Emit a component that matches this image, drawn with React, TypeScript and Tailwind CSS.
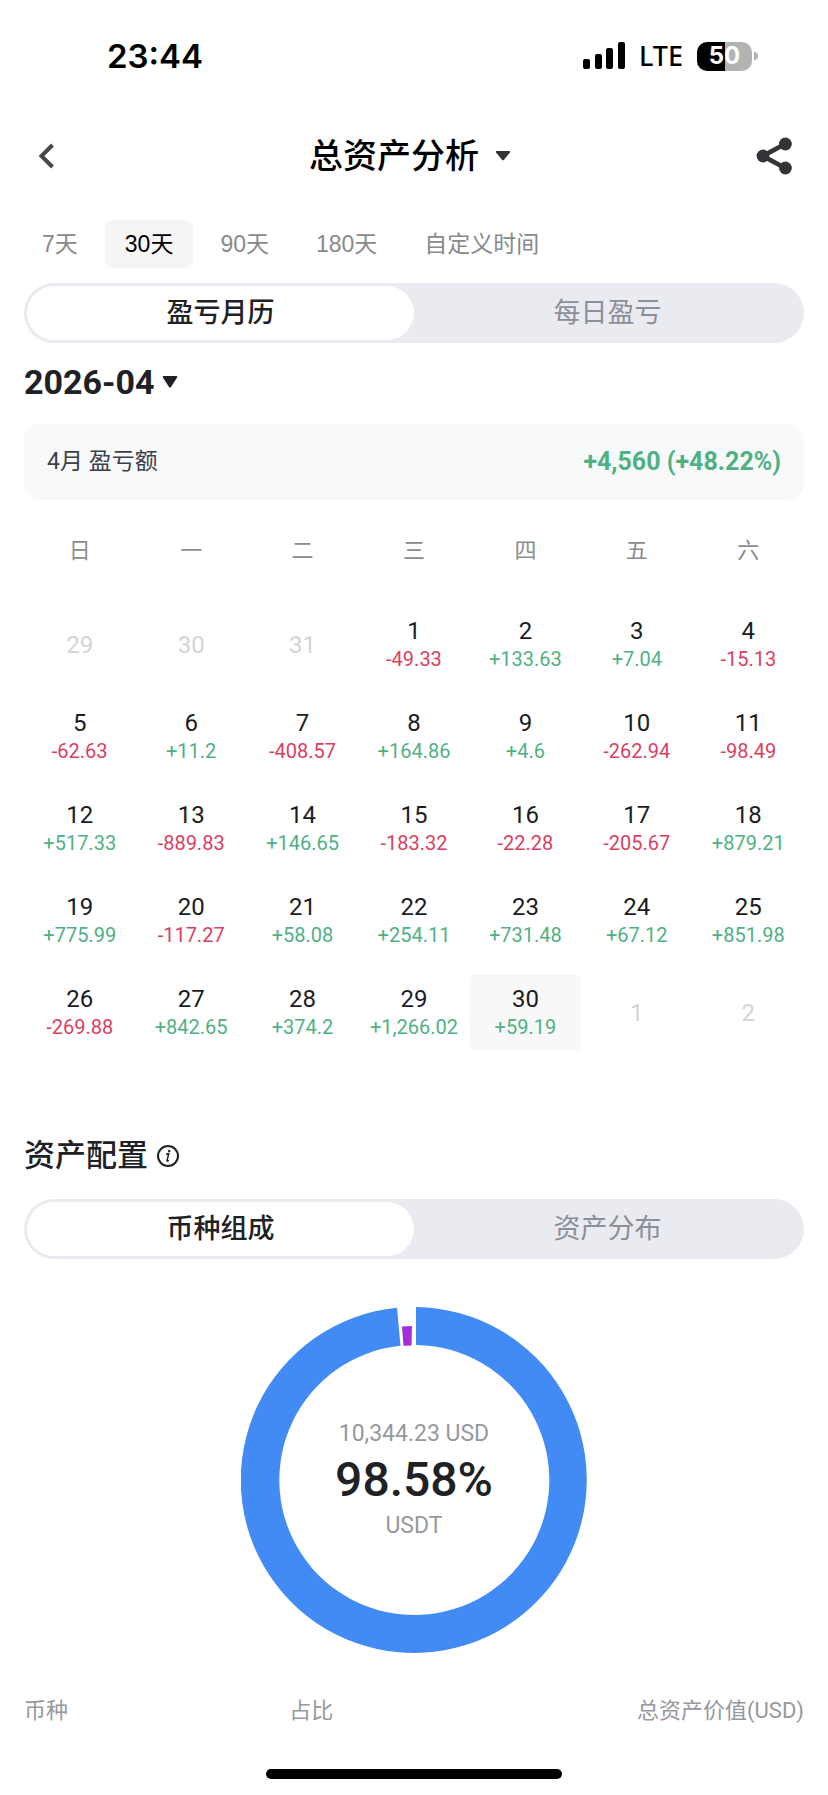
import { useState } from 'react';

type Day = { day: number; value?: string; muted?: boolean };

const ranges = ['7天', '30天', '90天', '180天', '自定义时间'];
const weekdays = ['日', '一', '二', '三', '四', '五', '六'];

const weeks: Day[][] = [
	[
		{ day: 29, muted: true },
		{ day: 30, muted: true },
		{ day: 31, muted: true },
		{ day: 1, value: '-49.33' },
		{ day: 2, value: '+133.63' },
		{ day: 3, value: '+7.04' },
		{ day: 4, value: '-15.13' },
	],
	[
		{ day: 5, value: '-62.63' },
		{ day: 6, value: '+11.2' },
		{ day: 7, value: '-408.57' },
		{ day: 8, value: '+164.86' },
		{ day: 9, value: '+4.6' },
		{ day: 10, value: '-262.94' },
		{ day: 11, value: '-98.49' },
	],
	[
		{ day: 12, value: '+517.33' },
		{ day: 13, value: '-889.83' },
		{ day: 14, value: '+146.65' },
		{ day: 15, value: '-183.32' },
		{ day: 16, value: '-22.28' },
		{ day: 17, value: '-205.67' },
		{ day: 18, value: '+879.21' },
	],
	[
		{ day: 19, value: '+775.99' },
		{ day: 20, value: '-117.27' },
		{ day: 21, value: '+58.08' },
		{ day: 22, value: '+254.11' },
		{ day: 23, value: '+731.48' },
		{ day: 24, value: '+67.12' },
		{ day: 25, value: '+851.98' },
	],
	[
		{ day: 26, value: '-269.88' },
		{ day: 27, value: '+842.65' },
		{ day: 28, value: '+374.2' },
		{ day: 29, value: '+1,266.02' },
		{ day: 30, value: '+59.19' },
		{ day: 1, muted: true },
		{ day: 2, muted: true },
	],
];

const StatusBar = () => (
	<div className="flex h-10 items-center justify-between pl-[83px] pr-[46px] text-black">
		<span className="font-['Inter',sans-serif] text-[33px] leading-10 font-semibold">23:44</span>
		<div className="flex items-center">
			<svg width="42" height="28" viewBox="0 0 42 28" aria-hidden="true">
				<rect x="0" y="17" width="7" height="10" rx="2" />
				<rect x="12" y="12" width="7" height="15" rx="2" />
				<rect x="23" y="6" width="7" height="21" rx="2" />
				<rect x="35" y="0" width="7" height="27" rx="2" />
			</svg>
			<span className="ml-3.5 font-['Noto_Sans',sans-serif] text-[27px] leading-8 font-medium">LTE</span>
			<div className="ml-3.5 flex items-center">
				<div className="flex h-[29px] w-[55px] items-center justify-center rounded-[10px] bg-linear-to-r from-black from-50% to-[#b3b3b3] to-50% font-['Inter',sans-serif] text-2xl font-bold text-white">
					50
				</div>
				<svg className="ml-0.5" width="4" height="10" viewBox="0 0 4 10" aria-hidden="true">
					<path d="M0 0.5C2.6 1.4 4 3 4 5S2.6 8.6 0 9.5Z" fill="#b3b3b3" />
				</svg>
			</div>
		</div>
	</div>
);

const NavBar = () => (
	<header className="mt-14 flex h-12 items-center justify-between px-3">
		<button type="button" aria-label="返回" className="flex w-8 items-center">
			<svg width="20" height="28" viewBox="0 0 20 28" fill="none" aria-hidden="true">
				<path d="M16.5 3 5.5 14 16.5 25" stroke="#47484b" strokeWidth="4" />
			</svg>
		</button>
		<button type="button" aria-haspopup="menu" className="flex items-center gap-4 text-black">
			<h1 className="text-[34px] leading-[48px] font-medium">总资产分析</h1>
			<svg width="16" height="12" viewBox="0 0 16 12" aria-hidden="true">
				<path d="M1.6 1H14.4C15.2 1 15.5 1.9 15 2.5L9 9.7C8.4 10.4 7.6 10.4 7 9.7L1 2.5C.5 1.9.8 1 1.6 1Z" fill="#333437" />
			</svg>
		</button>
		<button type="button" aria-label="分享" className="flex w-10 justify-end">
			<svg width="36" height="38" viewBox="0 0 36 38" aria-hidden="true">
				<path d="M29 7 7 19 29 31" stroke="#333437" strokeWidth="4.8" fill="none" />
				<circle cx="7" cy="19" r="6.4" fill="#333437" />
				<circle cx="29.4" cy="7" r="6.4" fill="#333437" />
				<circle cx="29.4" cy="31" r="6.4" fill="#333437" />
			</svg>
		</button>
	</header>
);

const Segmented = ({ options }: { options: string[] }) => {
	const [active, setActive] = useState(options[0]);
	return (
		<div className="flex h-[60px] rounded-full bg-[#eaebf1] p-[3px]">
			{options.map((option) => (
				<button
					key={option}
					type="button"
					aria-pressed={option === active}
					onClick={() => setActive(option)}
					className={`flex-1 rounded-full text-[27px] leading-10 ${
						option === active ? 'bg-white font-medium text-[#202124]' : 'text-[#8c8f98]'
					}`}>
					{option}
				</button>
			))}
		</div>
	);
};

const Calendar = () => {
	const [selected, setSelected] = useState(30);
	return (
		<table className="mt-[21px] w-full table-fixed border-separate border-spacing-x-0 border-spacing-y-4">
			<thead>
				<tr>
					{weekdays.map((name) => (
						<th key={name} className="h-[54px] p-0 align-top text-[22px] leading-7 font-normal text-[#8a8c8f]">
							{name}
						</th>
					))}
				</tr>
			</thead>
			<tbody>
				{weeks.map((week, i) => (
					<tr key={i}>
						{week.map(({ day, value, muted }) => (
							<td key={day} className="p-0">
								<button
									type="button"
									disabled={muted}
									onClick={() => setSelected(day)}
									className={`flex h-[76px] w-full flex-col items-center justify-center rounded-sm ${
										!muted && day === selected ? 'bg-[#f8f8f8]' : ''
									}`}>
									<span className={`text-2xl leading-7 ${muted ? 'text-[#d3d4d8]' : 'text-[#1b1c1f]'}`}>{day}</span>
									{value && (
										<span
											className={`text-xl leading-7 ${value.startsWith('+') ? 'text-[#4fb183]' : 'text-[#da3f62]'}`}>
											{value}
										</span>
									)}
								</button>
							</td>
						))}
					</tr>
				))}
			</tbody>
		</table>
	);
};

const Donut = () => (
	<div className="mt-12 grid place-items-center">
		<svg className="col-start-1 row-start-1" width="346" height="346" viewBox="-173 -173 346 346" aria-hidden="true">
			<path d="M2-173A173 173 0 1 1-17-172.2L-13.5-134.3A135 135 0 1 0 2-135Z" fill="#428bf5" />
			<path d="M-12-153.5A154 154 0 0 1-2-154L-2.5-134.5A135 135 0 0 0-10.5-134.2Z" fill="#a22fd8" />
		</svg>
		<div className="col-start-1 row-start-1 flex flex-col items-center text-[23px] leading-7 text-[#96999d]">
			<span>10,344.23 USD</span>
			<strong className="text-5xl leading-[64px] font-medium text-[#202124]">98.58%</strong>
			<span>USDT</span>
		</div>
	</div>
);

const App = () => {
	const [range, setRange] = useState('30天');

	return (
		<div className="min-h-screen bg-white px-6 pt-9 pb-4 font-['Roboto','Noto_Sans_CJK_SC',sans-serif]">
			<StatusBar />
			<NavBar />

			<main>
				<div className="mt-10 -ml-0.5 flex gap-[7px] font-['Liberation_Sans','Noto_Sans_CJK_SC',sans-serif]">
					{ranges.map((item) => (
						<button
							key={item}
							type="button"
							aria-pressed={item === range}
							onClick={() => setRange(item)}
							className={`h-12 rounded-lg px-5 text-[23px] leading-8 ${
								item === range ? 'bg-[#f5f5f5] text-black' : 'text-[#87898c]'
							}`}>
							{item}
						</button>
					))}
				</div>

				<section className="mt-[15px]">
					<Segmented options={['盈亏月历', '每日盈亏']} />
					<button type="button" aria-haspopup="dialog" className="mt-[19px] flex h-10 items-center gap-2 text-[#202124]">
						<span className="text-[34px] leading-10 font-bold">2026-04</span>
						<svg width="16" height="14" viewBox="0 0 16 14" fill="currentColor" aria-hidden="true">
							<path d="M1.6 1H14.4C15.2 1 15.5 1.8 15.1 2.4L9 11.9C8.5 12.7 7.5 12.7 7 11.9L.9 2.4C.5 1.8.8 1 1.6 1Z" />
						</svg>
					</button>
					<div className="mt-[22px] flex h-[76px] items-center justify-between rounded-2xl bg-[#f8f9fb] px-[23px]">
						<span className="text-[23px] leading-8 text-[#3d4049]">4月 盈亏额</span>
						<span className="text-[25px] leading-8 font-bold text-[#4fb183]">+4,560 (+48.22%)</span>
					</div>
					<Calendar />
				</section>

				<section className="mt-[69px]">
					<div className="mb-[23px] flex h-10 items-center gap-2">
						<h2 className="text-[31px] leading-10 font-medium text-[#202124]">资产配置</h2>
						<button type="button" aria-label="说明">
							<svg width="24" height="24" viewBox="0 0 24 24" fill="none" stroke="#202124" aria-hidden="true">
								<circle cx="12" cy="12" r="10" strokeWidth="2" />
								<path d="M10.2 10.2 12.8 9.6 11 16.6C10.8 17.6 11.8 17.2 12.8 16.2" strokeWidth="1.5" />
								<circle cx="13.2" cy="6.9" r="1.2" fill="#202124" stroke="none" />
							</svg>
						</button>
					</div>
					<Segmented options={['币种组成', '资产分布']} />
					<Donut />
					<table className="mt-11 w-full table-fixed text-left text-[22px] leading-7 text-[#96999d]">
						<thead>
							<tr>
								<th className="w-[34%] p-0 font-normal">币种</th>
								<th className="w-[26%] p-0 font-normal">占比</th>
								<th className="p-0 text-right font-normal">总资产价值(USD)</th>
							</tr>
						</thead>
					</table>
				</section>
			</main>

			<div className="mx-auto mt-11 h-2.5 w-[38%] rounded-full bg-black" />
		</div>
	);
};

export default App;
